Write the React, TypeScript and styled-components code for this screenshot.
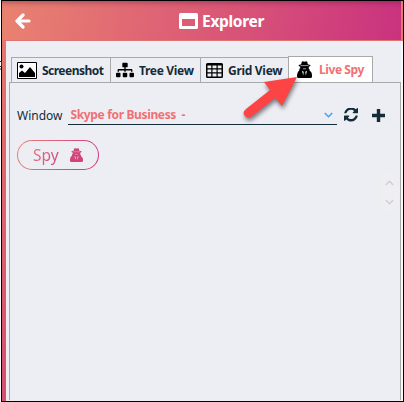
import React from 'react';
import styled, { createGlobalStyle } from 'styled-components';
import { FaSitemap } from 'react-icons/fa';

const Global = createGlobalStyle`
  * { box-sizing: border-box; }
  body { margin: 0; background: #fff; font-family: "Noto Sans", "Open Sans", sans-serif; color: #142c38; overflow: hidden; }
  svg { display: block; flex: none; }
`;

const Frame = styled.div`
  position: relative;
  width: 404px;
  height: 402px;
  padding-left: 1px;
  overflow: hidden;
`;
const Shell = styled.div`
  height: 402px;
  border: 1px solid #000;
  padding-left: 4px;
  background: linear-gradient(180deg, #e87c6c 0, #e06c6d 120px, #d25072 401px);
`;
const Header = styled.header`
  display: flex;
  align-items: center;
  height: 40px;
  margin: 0 2px 0 -4px;
  padding-left: 13px;
  color: #fff;
  background: linear-gradient(100deg, #e98370 0%, #dc5d75 47%, #ca327f 100%);
  border-bottom: 1px solid #e17472;
  box-shadow: inset 0 6px 5px -4px rgba(100, 20, 60, .4);
`;
const Title = styled.h1`
  display: flex;
  align-items: center;
  gap: 4px;
  margin: 1px 0 0 147px;
  font-size: 15.5px;
  line-height: 20px;
  font-weight: 700;
  letter-spacing: -.3px;
`;
const Body = styled.main`
  height: 360px;
  padding: 15px 2px 0 3px;
  background: #edeef4;
  border-right: 2px solid #f8f8fa;
`;
const Tabs = styled.nav`
  display: flex;
  align-items: flex-end;
  height: 27px;
  padding-left: 2px;
`;
const Tab = styled.div<{ $w: number; $gap: number; $active?: boolean }>`
  display: flex;
  align-items: center;
  gap: ${p => p.$gap}px;
  width: ${p => p.$w}px;
  height: ${p => (p.$active ? 27 : 26)}px;
  padding-left: ${p => (p.$active ? 8 : 5)}px;
  border: 1px solid #a9a9ac;
  border-right-width: ${p => (p.$active ? 1 : 0)}px;
  color: ${p => (p.$active ? '#f07173' : '#142c38')};
  background: ${p => (p.$active ? '#fff' : '#edeef4')};
  font-size: 12px;
  font-weight: 700;
  white-space: nowrap;
  svg { color: #000; }
`;
const Label = styled.span<{ $spacing?: number }>`
  letter-spacing: ${p => p.$spacing ?? 0}px;
`;
const Pane = styled.section`
  height: 318px;
  margin-top: -1px;
  margin-right: -2px;
  padding: 22px 0 0 7px;
  border: 1px solid #a9a9ac;
  border-bottom: 0;
`;
const Row = styled.div`
  display: flex;
  height: 20px;
  align-items: center;
  font-size: 12px;
`;
const Select = styled.div`
  display: flex;
  align-items: center;
  justify-content: space-between;
  width: 269px;
  height: 20px;
  margin-left: 5px;
  padding: 0 4px 0 3px;
  border-bottom: 1px solid #142c38;
  color: #f07173;
  font-weight: 700;
  white-space: pre;
`;
const Actions = styled.div`
  display: flex;
  align-items: center;
  gap: 14px;
  margin-left: 7px;
`;
const SpyButton = styled.button`
  display: flex;
  align-items: center;
  gap: 11px;
  width: 82px;
  height: 30px;
  margin-top: 15px;
  padding: 0 0 0 15px;
  border: 1px solid transparent;
  border-radius: 15px;
  background: linear-gradient(#edeef4, #edeef4) padding-box,
    linear-gradient(110deg, #e98377, #cc3681) border-box;
  color: #d6547a;
  font: 400 15.5px "Noto Sans", sans-serif;
`;
const SpyText = styled.span`
  background: linear-gradient(110deg, #e3777a, #ce467e);
  background-clip: text;
  color: transparent;
`;
const Scroller = styled.div`
  display: flex;
  flex-direction: column;
  align-items: center;
  justify-content: space-between;
  width: 18px;
  height: 36px;
  margin: 4px 2px 0 auto;
  padding: 6px 2px 5px 3px;
  background: #efeff1;
`;
const Overlay = styled.svg`
  position: absolute;
  left: 232px;
  top: 65px;
  filter: drop-shadow(1px 3px 2px rgba(60, 60, 70, .65));
`;
const Sliver = styled.svg`
  position: absolute;
  left: 0;
  top: 58px;
`;

const BackIcon = () => (
  <svg width="17" height="16" viewBox="0 0 17 16">
    <path d="M8 2 2 8l6 6M2.500 8H14" fill="none" stroke="currentColor" strokeWidth="3.200" strokeLinecap="round" strokeLinejoin="round" />
  </svg>
);
const RefreshIcon = () => (
  <svg width="14" height="14" viewBox="0 64 1536 1536">
    <path fill="currentColor" d="M1511 928q0 5-1 7-64 268-268 434.500t-478 166.500q-146 0-282.500-55t-243.500-157l-129 129q-19 19-45 19t-45-19-19-45v-448q0-26 19-45t45-19h448q26 0 45 19t19 45-19 45l-137 137q71 66 161 102t187 36q134 0 250-65t186-179q11-17 53-117 8-23 30-23h192q13 0 22.500 9.500t9.500 22.500zm25-800v448q0 26-19 45t-45 19h-448q-26 0-45-19t-19-45 19-45l138-138q-148-137-349-137-134 0-250 65t-186 179q-11 17-53 117-8 23-30 23h-199q-13 0-22.500-9.500t-9.500-22.500v-7q65-268 270-434.500t480-166.500q146 0 284 55.500t245 156.500l130-129q19-19 45-19t45 19 19 45z" />
  </svg>
);
const PlusIcon = () => (
  <svg width="13" height="13" viewBox="0 0 13 13">
    <path d="M6.500 0v13M0 6.500h13" fill="none" stroke="currentColor" strokeWidth="3.400" />
  </svg>
);
const WindowIcon = () => (
  <svg width="19" height="16" viewBox="0 0 19 16">
    <path fill="#fff" fillRule="evenodd" d="M1.500 0h16Q19 0 19 1.500v13q0 1.500-1.500 1.500h-16Q0 16 0 14.500v-13Q0 0 1.500 0ZM3 6v7h13V6Z" />
  </svg>
);
const PictureIcon = () => (
  <svg width="20" height="17" viewBox="0 0 20 17">
    <path fill="#fff" stroke="#000" d="M.5.5h19v16H.5Z" />
    <circle cx="4.500" cy="4.500" r="2" />
    <path d="M2 15v-4l3-2.500L8 11l5-6 5 6v4Z" />
  </svg>
);
const GridIcon = () => (
  <svg width="17" height="15" viewBox="0 0 17 15">
    <path fill="currentColor" fillRule="evenodd" d="M1.500 0h14Q17 0 17 1.500v12q0 1.500-1.500 1.500h-14Q0 15 0 13.500v-12Q0 0 1.500 0ZM1.500 2.500v2.800h3.800V2.500Zm5 0v2.800h4V2.500Zm5.200 0v2.800h3.800V2.500ZM1.500 6.500v2.800h3.800V6.500Zm5 0v2.800h4V6.500Zm5.200 0v2.800h3.800V6.500ZM1.500 10.500v3h3.800v-3Zm5 0v3h4v-3Zm5.200 0v3h3.800v-3Z" />
  </svg>
);
const SpyIcon = ({ w, h, fill = '#000', detail = '#fff' }: { w: number; h: number; fill?: string; detail?: string }) => (
  <svg width={w} height={h} viewBox="0 0 15 17" preserveAspectRatio="none">
    <path fill={fill} d="M4.200 3.300 4.800.7Q5.300-.1 6.500.4L7.500.8 8.600.4Q9.700-.1 10.200.7l.6 2.600 2.500.7v1l-1.500.7v2.200l1 .7-.3 1Q15 11 15 14v1.500Q15 17 13.500 17h-12Q0 17 0 15.500V14q0-3 2.500-5.100l-.3-1 1-.7V5.700L1.700 5V4Z" />
    <path stroke={detail} strokeWidth=".6" fill="none" d="M3.500 4.600h8M6 7.800h3" />
    <path fill={detail} d="m5 9.800 1.700 1-.5 3.700Zm5 0-1.700 1 .5 3.700Z" />
  </svg>
);
const Chevron = ({ up, color = '#3ba0ec', w = 9 }: { up?: boolean; color?: string; w?: number }) => (
  <svg width={w} height="6" viewBox="0 0 9 6">
    <path d={up ? 'M.8 5 4.500 1.200 8.200 5' : 'M.8 1 4.500 4.800 8.200 1'} fill="none" stroke={color} strokeWidth="1.400" />
  </svg>
);

export default function App() {
  return (
    <Frame>
      <Global />
      <Shell>
        <Header>
          <BackIcon />
          <Title><WindowIcon />Explorer</Title>
        </Header>
        <Body>
          <Tabs>
            <Tab $w={99} $gap={5}><PictureIcon /><Label $spacing={-0.52}>Screenshot</Label></Tab>
            <Tab $w={90} $gap={5}><FaSitemap size={18} /><Label $spacing={-0.32}>Tree View</Label></Tab>
            <Tab $w={88} $gap={5}><GridIcon /><Label $spacing={-0.3}>Grid View</Label></Tab>
            <Tab $w={85} $gap={7} $active><SpyIcon w={15} h={17} /><Label $spacing={-0.42}>Live Spy</Label></Tab>
          </Tabs>
          <Pane>
            <Row>
              <Label>Window</Label>
              <Select><Label $spacing={-0.35}>Skype for Business  -</Label><Chevron /></Select>
              <Actions><RefreshIcon /><PlusIcon /></Actions>
            </Row>
            <SpyButton>
              <SpyText>Spy</SpyText>
              <SpyIcon w={13} h={14} fill="#d0447c" detail="#edcbd8" />
            </SpyButton>
            <Scroller><Chevron up color="#cfcfd1" w={9} /><Chevron color="#cfcfd1" w={9} /></Scroller>
          </Pane>
        </Body>
      </Shell>
      <Overlay width="70" height="65" viewBox="0 0 70 65">
        <path fill="#fd4444" d="M65 12 50 41 43 33 19 52Q15 54 12.500 50.500T14 44L38 25 32 17Z" />
      </Overlay>
      <Sliver width="3" height="14" viewBox="0 0 3 14">
        <path d="M0 3.500h1.500v5H0M0 11h1.500" fill="none" stroke="#29292d" />
      </Sliver>
    </Frame>
  );
}
